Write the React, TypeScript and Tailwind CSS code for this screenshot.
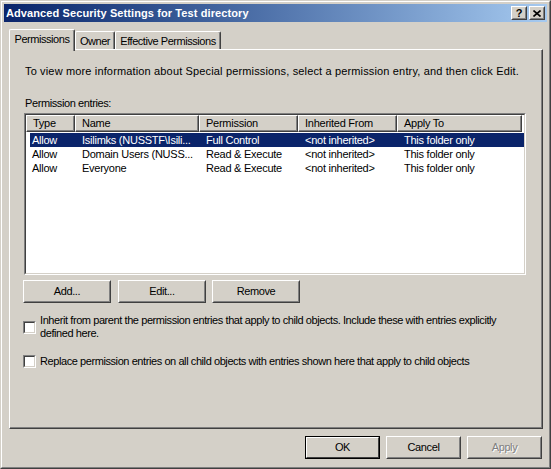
const UI = "font-['Liberation_Sans',Arial,sans-serif] text-[11px] leading-[13px] tracking-[-0.25px]"

const COLUMNS = [
  { label: 'Type', width: 'w-[49px]' },
  { label: 'Name', width: 'w-[124px]' },
  { label: 'Permission', width: 'w-[99px]' },
  { label: 'Inherited From', width: 'w-[99px]' },
  { label: 'Apply To', width: 'w-[125px]' },
]

const ROWS = [
  { type: 'Allow', name: 'Isilimks (NUSSTF\\Isili...', permission: 'Full Control', selected: true },
  { type: 'Allow', name: 'Domain Users (NUSS...', permission: 'Read & Execute', selected: false },
  { type: 'Allow', name: 'Everyone', permission: 'Read & Execute', selected: false },
]

function Button({ label, width, isDefault, disabled }: { label: string; width: string; isDefault?: boolean; disabled?: boolean }) {
  const text = disabled ? 'text-[#808080] [text-shadow:1px_1px_0_#ffffff]' : 'text-black'
  if (isDefault) {
    return (
      <div className={`${width} h-[23px] shrink-0 border border-black`}>
        <div className="flex h-full items-center justify-center border border-t-white border-l-white border-r-[#404040] border-b-[#404040] tracking-[-0.4px]">
          <span className={text}>{label}</span>
        </div>
      </div>
    )
  }
  return (
    <div className={`${width} h-[23px] shrink-0 border border-t-white border-l-white border-r-[#404040] border-b-[#404040]`}>
      <div className="flex h-full items-center justify-center border border-t-[#d4d0c8] border-l-[#d4d0c8] border-r-[#808080] border-b-[#808080] tracking-[-0.4px]">
        <span className={text}>{label}</span>
      </div>
    </div>
  )
}

function Checkbox() {
  return (
    <div className="h-[13px] w-[13px] shrink-0 border border-t-[#808080] border-l-[#808080] border-r-white border-b-white">
      <div className="h-full w-full border border-t-[#404040] border-l-[#404040] border-r-[#d4d0c8] border-b-[#d4d0c8] bg-white" />
    </div>
  )
}

function CaptionButton({ children }: { children: React.ReactNode }) {
  return (
    <div className="h-[14px] w-[16px] border border-t-white border-l-white border-r-[#404040] border-b-[#404040] bg-[#d4d0c8]">
      <div className="flex h-full items-center justify-center border border-t-[#d4d0c8] border-l-[#d4d0c8] border-r-[#808080] border-b-[#808080]">
        {children}
      </div>
    </div>
  )
}

function Tab({ label, width, selected }: { label: string; width: string; selected?: boolean }) {
  const size = selected ? '-mb-[2px] h-[22px]' : 'h-[18px]'
  return (
    <div
      className={`${width} ${size} flex items-start justify-center whitespace-nowrap rounded-t-[2px] border-l border-t border-r border-l-white border-t-white border-r-[#404040] bg-[#d4d0c8] pt-[3px] tracking-[-0.45px] shadow-[inset_-1px_0_0_#808080]`}
    >
      {label}
    </div>
  )
}

export default function App() {
  return (
    <div className={`${UI} h-[469px] w-[551px] border border-t-[#d4d0c8] border-l-[#d4d0c8] border-r-[#404040] border-b-[#404040] bg-[#d4d0c8] text-black`}>
      <div className="flex h-full flex-col border border-t-white border-l-white border-r-[#808080] border-b-[#808080] p-[2px]">
        {/* title bar */}
        <div className="flex h-[18px] shrink-0 items-center bg-gradient-to-r from-[#0a246a] to-[#a6caf0] pl-[2px] pr-[2px]">
          <span className="flex-1 font-bold tracking-[0.1px] text-white">Advanced Security Settings for Test directory</span>
          <div className="flex gap-[2px]">
            <CaptionButton>
              <span className="text-[11px] font-bold leading-none text-black">?</span>
            </CaptionButton>
            <CaptionButton>
              <svg width="8" height="7" viewBox="0 0 8 7">
                <path d="M0.5 0.5 L7.5 6.5 M7.5 0.5 L0.5 6.5" stroke="#000" strokeWidth="1.6" />
              </svg>
            </CaptionButton>
          </div>
        </div>

        {/* tabs */}
        <div className="relative z-10 ml-[5px] mt-[7px] flex h-[20px] items-end">
          <Tab label="Permissions" width="w-[66px]" selected />
          <Tab label="Owner" width="w-[40px]" />
          <Tab label="Effective Permissions" width="w-[106px]" />
        </div>

        {/* panel */}
        <div className="ml-[5px] h-[380px] w-[534px] shrink-0 border border-t-white border-l-white border-r-[#404040] border-b-[#404040] pl-[13px] shadow-[inset_-1px_-1px_0_#808080]">
          <p className="ml-[2px] mt-[15px] whitespace-nowrap tracking-[0.15px]">
            To view more information about Special permissions, select a permission entry, and then click Edit.
          </p>
          <p className="ml-[2px] mt-[19px] tracking-[-0.4px]">Permission entries:</p>

          <div className="ml-[1px] mt-[3px] h-[162px] w-[502px] border border-t-[#808080] border-l-[#808080] border-r-white border-b-white">
            <div className="h-full border border-t-[#404040] border-l-[#404040] border-r-[#d4d0c8] border-b-[#d4d0c8] bg-white">
              <div className="flex h-[17px]">
                {COLUMNS.map((col) => (
                  <div
                    key={col.label}
                    className={`${col.width} flex items-center whitespace-nowrap border border-t-white border-l-white border-r-[#404040] border-b-[#404040] bg-[#d4d0c8] pl-[6px] shadow-[inset_-1px_-1px_0_#808080]`}
                  >
                    {col.label}
                  </div>
                ))}
              </div>
              <div className="mt-[1px]">
                {ROWS.map((row) => (
                  <div
                    key={row.name}
                    className={`ml-[4px] flex h-[14px] items-center whitespace-nowrap ${row.selected ? 'bg-[#0a246a] text-white' : ''}`}
                  >
                    <span className="w-[45px] shrink-0 pl-[2px]">{row.type}</span>
                    <span className="w-[124px] shrink-0 pl-[7px]">{row.name}</span>
                    <span className="w-[99px] shrink-0 pl-[7px]">{row.permission}</span>
                    <span className="w-[99px] shrink-0 pl-[7px]">&lt;not inherited&gt;</span>
                    <span className="pl-[7px]">This folder only</span>
                  </div>
                ))}
              </div>
            </div>
          </div>

          <div className="mt-[5px] flex">
            <Button label="Add..." width="w-[88px]" />
            <div className="ml-[7px]">
              <Button label="Edit..." width="w-[88px]" />
            </div>
            <div className="ml-[6px]">
              <Button label="Remove" width="w-[88px]" />
            </div>
          </div>

          <label className="mt-[11px] flex items-center gap-[4px] tracking-[-0.42px]">
            <Checkbox />
            <span className="whitespace-nowrap">
              Inherit from parent the permission entries that apply to child objects. Include these with entries explicitly
              <br />
              defined here.
            </span>
          </label>

          <label className="mt-[15px] flex items-center gap-[4px] tracking-[-0.42px]">
            <Checkbox />
            <span className="whitespace-nowrap">Replace permission entries on all child objects with entries shown here that apply to child objects</span>
          </label>
        </div>

        {/* dialog buttons */}
        <div className="mt-[7px] flex justify-end gap-[6px] pr-[5px]">
          <Button label="OK" width="w-[75px]" isDefault />
          <Button label="Cancel" width="w-[75px]" />
          <Button label="Apply" width="w-[75px]" disabled />
        </div>
      </div>
    </div>
  )
}
